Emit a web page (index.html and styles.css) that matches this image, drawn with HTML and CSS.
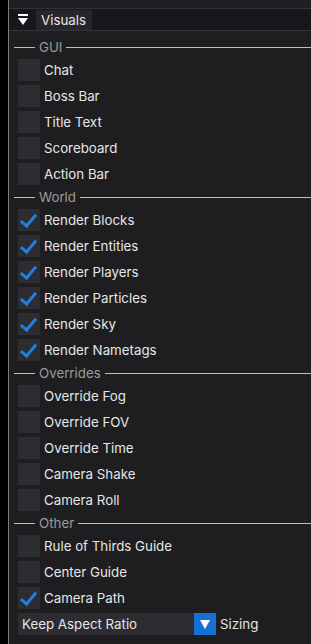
FILE: index.html
```html
<!DOCTYPE html>
<html lang="en">
<head>
    <meta charset="UTF-8">
    <title>Visuals</title>
    <link rel="stylesheet" href="styles.css">
</head>
<body>
    <div class="app">
        <div class="gutter"></div>
        <div class="panel">
            <div class="topstrip"></div>

            <!-- Collapsing header -->
            <div class="header">
                <span class="arrow"><span class="bar"></span><span class="tri"></span></span>
                <span class="title">Visuals</span>
            </div>

            <div class="body">
                <div class="section"><span class="rule short"></span><span class="label">GUI</span><span class="rule"></span></div>
                <div class="item"><span class="check"></span>Chat</div>
                <div class="item"><span class="check"></span>Boss Bar</div>
                <div class="item"><span class="check"></span>Title Text</div>
                <div class="item"><span class="check"></span>Scoreboard</div>
                <div class="item"><span class="check"></span>Action Bar</div>

                <div class="section"><span class="rule short"></span><span class="label">World</span><span class="rule"></span></div>
                <div class="item"><span class="check on"></span>Render Blocks</div>
                <div class="item"><span class="check on"></span>Render Entities</div>
                <div class="item"><span class="check on"></span>Render Players</div>
                <div class="item"><span class="check on"></span>Render Particles</div>
                <div class="item"><span class="check on"></span>Render Sky</div>
                <div class="item"><span class="check on"></span>Render Nametags</div>

                <div class="section"><span class="rule short"></span><span class="label">Overrides</span><span class="rule"></span></div>
                <div class="item"><span class="check"></span>Override Fog</div>
                <div class="item"><span class="check"></span>Override FOV</div>
                <div class="item"><span class="check"></span>Override Time</div>
                <div class="item"><span class="check"></span>Camera Shake</div>
                <div class="item"><span class="check"></span>Camera Roll</div>

                <div class="section"><span class="rule short"></span><span class="label">Other</span><span class="rule"></span></div>
                <div class="item"><span class="check"></span>Rule of Thirds Guide</div>
                <div class="item"><span class="check"></span>Center Guide</div>
                <div class="item"><span class="check on"></span>Camera Path</div>

                <div class="combo-row">
                    <div class="combo">Keep Aspect Ratio</div>
                    <div class="combo-btn"><span class="tri"></span></div>
                    <span class="combo-label">Sizing</span>
                </div>
            </div>
        </div>
    </div>
</body>
</html>
```

FILE: styles.css
```css
body {
    margin: 0;
    background-color: #1e1e21;
    font-family: Inter, "Noto Sans", sans-serif;
    font-size: 13.3px;
    color: #e6e6e6;
}

.app {
    display: flex;
    height: 644px;
    overflow: hidden;
}

.gutter {
    width: 8px;
    background-color: #000;
    border-right: 1px solid #7c7c7c;
}

.panel {
    flex: 1;
    background-color: #1e1e21;
}

.topstrip {
    height: 8px;
    background-color: #202024;
    border-bottom: 1px solid #333338;
}

.header {
    display: flex;
    align-items: center;
    height: 21px;
    background-color: #17171b;
    border-bottom: 1px solid #333338;
    padding-left: 9px;
}

.arrow {
    display: flex;
    flex-direction: column;
    align-items: center;
    width: 10px;
    margin-right: 8px;
}

.arrow .bar {
    width: 10px;
    height: 2px;
    background-color: #fff;
    margin-bottom: 2px;
}

.arrow .tri {
    width: 0;
    height: 0;
    border-left: 5px solid transparent;
    border-right: 5px solid transparent;
    border-top: 7px solid #fff;
}

.title {
    display: flex;
    align-items: center;
    height: 20px;
    margin-top: 1px;
    padding: 0 6px 0 5px;
    background-color: #26262b;
}

.body {
    display: flex;
    flex-direction: column;
    gap: 4px;
    padding: 8px 0 0 5px;
}

.section {
    display: flex;
    align-items: center;
    height: 16px;
    color: #9a9a9a;
    gap: 4px;
}

.rule {
    flex: 1;
    height: 1px;
    background-color: #bdbdbd;
}

.rule.short {
    flex: none;
    width: 21px;
}

.item {
    display: flex;
    align-items: center;
    height: 22px;
    padding-left: 4px;
}

.check {
    position: relative;
    width: 22px;
    height: 22px;
    margin-right: 4px;
    background-color: #2c2c31;
}

.check.on::after {
    content: "";
    position: absolute;
    left: 6px;
    top: 2px;
    width: 6px;
    height: 13px;
    border-right: 3px solid #1f80e0;
    border-bottom: 3px solid #1f80e0;
    transform: rotate(40deg);
}

.combo-row {
    display: flex;
    align-items: center;
    height: 22px;
    padding-left: 4px;
}

.combo {
    display: flex;
    align-items: center;
    width: 172px;
    height: 22px;
    padding-left: 4px;
    background-color: #2c2c31;
}

.combo-btn {
    display: flex;
    align-items: center;
    justify-content: center;
    width: 22px;
    height: 22px;
    background-color: #1670d6;
}

.combo-btn .tri {
    width: 0;
    height: 0;
    border-left: 5px solid transparent;
    border-right: 5px solid transparent;
    border-top: 9px solid #fff;
}

.combo-label {
    margin-left: 4px;
}
```
